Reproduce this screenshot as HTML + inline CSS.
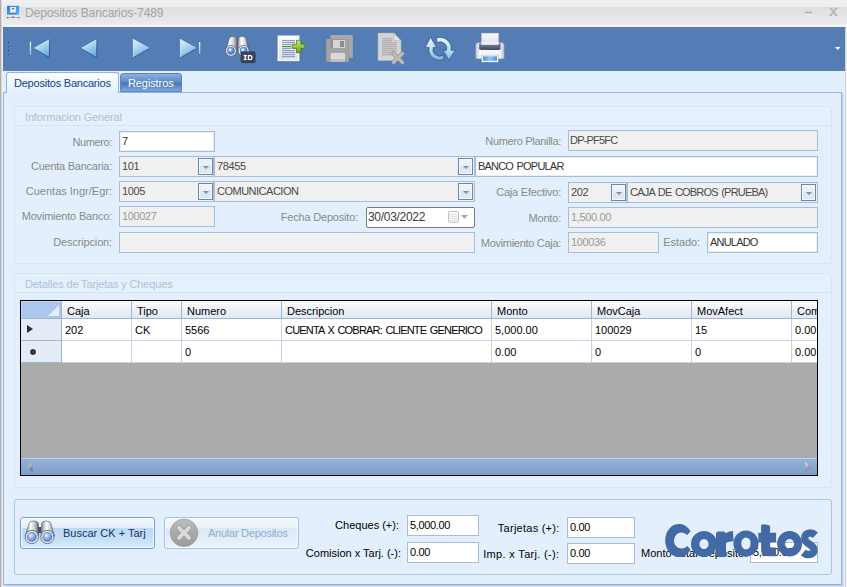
<!DOCTYPE html>
<html><head><meta charset="utf-8">
<style>
*{margin:0;padding:0;box-sizing:border-box}
html,body{width:847px;height:587px;overflow:hidden;background:#E3EFFD;font-family:"Liberation Sans",sans-serif;font-size:11px;color:#000}
.a{position:absolute}
.lbl{position:absolute;color:#8A8A8A;white-space:nowrap;line-height:13px;letter-spacing:-0.3px}
.lblk{position:absolute;color:#000;white-space:nowrap;line-height:13px}
.tb.up,.c.up{letter-spacing:-0.8px;word-spacing:1.2px}
.tb{position:absolute;border:1px solid #A7BDD9;background:#F0F0F0;height:21px;white-space:nowrap;overflow:hidden;padding:3px 0 0 2px;line-height:13px;color:#4A4A4A;letter-spacing:-0.35px}
.tb.w{background:#fff;color:#333;box-shadow:inset 0 0 0 1px #EEEEEE}
.tb.w2{background:#fff;color:#000}
.tb.d{color:#9A9A9A}
.btn{position:absolute;border:1px solid #6A86AD;background:linear-gradient(#EEF3FB 0%,#E8EFF9 45%,#DAE6F5 50%,#DEE9F6 100%);width:15px;height:17px;box-shadow:inset 0 0 0 1px #F4F8FD}
.btn:after{content:"";position:absolute;left:3.5px;top:7px;border-left:3px solid transparent;border-right:3px solid transparent;border-top:3px solid #8E8E8E}
.grp{position:absolute;border:1px solid #D6E4F6;border-radius:3px}
.ghead{position:absolute;left:0;right:0;top:0;height:19px;border-bottom:1px solid #D6E4F6;background:#E5F0FD}
.gtext{position:absolute;left:10px;top:4px;color:#ADC1DC;white-space:nowrap;font-size:11px;letter-spacing:-0.15px}
.hc{position:absolute;top:0;height:18px;border-right:1px solid #9EB6CE;padding:4px 0 0 5px;line-height:13px;white-space:nowrap;overflow:hidden;background:linear-gradient(#F9FBFD,#E2E9F3);border-bottom:1px solid #9EB6CE}
.c{position:absolute;height:22px;border-right:1px solid #C5D3E3;border-bottom:1px solid #C5D3E3;padding:5px 0 0 3px;line-height:13px;white-space:nowrap;overflow:hidden;background:#fff}
</style></head><body>

<!-- window frame -->
<div class="a" style="left:0;top:0;width:847px;height:27px;background:linear-gradient(#F1F1F1 0px,#EDEDED 7px,#DFDFDF 7px,#E2E2E2 12px,#EBEBEB 24px,#F5F4F1 25px,#F5F4F1 27px)"></div>
<div class="a" style="left:0;top:0;width:1px;height:587px;background:#AEAEAE"></div>
<div class="a" style="left:1px;top:0;width:1px;height:587px;background:#D8D8D8"></div><div class="a" style="left:2px;top:0;width:1px;height:587px;background:#F2F0EC"></div>
<div class="a" style="left:845px;top:27px;width:1px;height:560px;background:#D3D3D3"></div><div class="a" style="left:846px;top:27px;width:1px;height:560px;background:#F0F0F0"></div>


<!-- title -->
<svg class="a" style="left:0;top:0" width="24" height="24" viewBox="0 0 24 24">
<defs><linearGradient id="mon" x1="0" y1="0" x2="1" y2="1"><stop offset="0" stop-color="#1F7DE8"/><stop offset="1" stop-color="#5AB4FA"/></linearGradient>
<linearGradient id="scr" x1="0" y1="0" x2="0" y2="1"><stop offset="0" stop-color="#FAF8F4"/><stop offset="1" stop-color="#C8C4BC"/></linearGradient></defs>
<rect x="6.4" y="5.1" width="13.5" height="10.2" fill="#F6F0E8"/>
<rect x="7" y="5.8" width="12.3" height="9" fill="url(#mon)"/>
<rect x="10" y="7.1" width="5.9" height="6.1" fill="url(#scr)"/>
<rect x="12" y="8" width="2" height="1.2" fill="#2E6FD0"/>
<rect x="10.3" y="10" width="5.3" height="1.6" fill="#FFFFFF"/>
<rect x="10" y="13.2" width="5.9" height="0.8" fill="#1F6FD0"/>
<rect x="6.8" y="17" width="12.5" height="1" fill="#B8B8B8"/>
<rect x="7" y="17" width="1.3" height="1.2" fill="#505050"/><rect x="18.2" y="17" width="1.3" height="1.2" fill="#606060"/>
<rect x="11.5" y="16.5" width="3" height="1.5" fill="#808080"/>
</svg>
<div class="a" style="left:25px;top:6px;font-size:12px;color:#A3A3A3;white-space:nowrap;letter-spacing:-0.1px">Depositos Bancarios-7489</div>
<svg class="a" style="left:798px;top:0" width="49" height="26" viewBox="798 0 49 26">
<rect x="805" y="13.6" width="7" height="1" fill="#FAFAFA"/>
<rect x="805" y="11.6" width="7" height="2" fill="#B4B4B4"/>
<g transform="translate(0 1)" fill="none" stroke="#FAFAFA" stroke-width="2.2"><path d="M830.5 8.5 L836.5 15.5 M836.5 8.5 L830.5 15.5"/><path d="M829 8.4 H832.5 M834.5 8.4 H838 M829 15.6 H832.5 M834.5 15.6 H838" stroke-width="1.2"/></g>
<g fill="none" stroke="#BBBBBB" stroke-width="2.2"><path d="M830.5 8.5 L836.5 15.5 M836.5 8.5 L830.5 15.5"/><path d="M829 8.4 H832.5 M834.5 8.4 H838 M829 15.6 H832.5 M834.5 15.6 H838" stroke-width="1.2"/></g>
</svg>


<!-- toolbar -->
<div class="a" style="left:3px;top:27px;width:842px;height:44px;background:#537DB4"></div>


<!-- toolbar icons -->
<svg class="a" style="left:0;top:0" width="847" height="71" viewBox="0 0 847 71">
<defs>
 <linearGradient id="tri" x1="0" y1="0" x2="0.5" y2="1"><stop offset="0" stop-color="#E2F4FC"/><stop offset="0.5" stop-color="#AAD6F0"/><stop offset="1" stop-color="#6DADDD"/></linearGradient>
 <linearGradient id="triR" x1="0" y1="0" x2="0.3" y2="1"><stop offset="0" stop-color="#E6F5FC"/><stop offset="0.5" stop-color="#B5DAF0"/><stop offset="1" stop-color="#7DB5DF"/></linearGradient>
 <linearGradient id="bar" x1="0" y1="0" x2="0" y2="1"><stop offset="0" stop-color="#F0FAFF"/><stop offset="1" stop-color="#8CC0E6"/></linearGradient>
 <linearGradient id="tube" x1="0" y1="0" x2="1" y2="0"><stop offset="0" stop-color="#9098A4"/><stop offset="0.35" stop-color="#FFFFFF"/><stop offset="0.7" stop-color="#C8CCD4"/><stop offset="1" stop-color="#6A707C"/></linearGradient>
 <radialGradient id="lens" cx="0.4" cy="0.35" r="0.75"><stop offset="0" stop-color="#DDEBFF"/><stop offset="0.4" stop-color="#6F9FE8"/><stop offset="0.85" stop-color="#3A6AD0"/><stop offset="1" stop-color="#70C0F0"/></radialGradient>
 <linearGradient id="page" x1="0" y1="0" x2="0" y2="1"><stop offset="0" stop-color="#F7F9FC"/><stop offset="1" stop-color="#DCE3EE"/></linearGradient>
 <linearGradient id="plus" x1="0" y1="0" x2="0" y2="1"><stop offset="0" stop-color="#C9E88A"/><stop offset="0.5" stop-color="#95C846"/><stop offset="1" stop-color="#6FA42A"/></linearGradient>
 <linearGradient id="ref" x1="0" y1="0" x2="0" y2="1"><stop offset="0" stop-color="#E8F7FD"/><stop offset="0.5" stop-color="#BFE0F3"/><stop offset="1" stop-color="#7DB4DE"/></linearGradient>
 <linearGradient id="pbody" x1="0" y1="0" x2="1" y2="0"><stop offset="0" stop-color="#B9C0D2"/><stop offset="0.15" stop-color="#F4F6FA"/><stop offset="0.85" stop-color="#F4F6FA"/><stop offset="1" stop-color="#B9C0D2"/></linearGradient>
 <linearGradient id="pslot" x1="0" y1="0" x2="0" y2="1"><stop offset="0" stop-color="#7A86A0"/><stop offset="1" stop-color="#3E4A63"/></linearGradient>
 <linearGradient id="ppaper" x1="0" y1="0" x2="0" y2="1"><stop offset="0" stop-color="#F8F9FC"/><stop offset="1" stop-color="#D9DEEA"/></linearGradient>
 <linearGradient id="ptray" x1="0" y1="0" x2="1" y2="0"><stop offset="0" stop-color="#4F97DB"/><stop offset="0.5" stop-color="#8CC4F0"/><stop offset="1" stop-color="#4F97DB"/></linearGradient>
</defs>
<!-- grip -->
<g fill="#3A5C8C"><rect x="8" y="42" width="2" height="2"/><rect x="8" y="46" width="2" height="2"/><rect x="8" y="50" width="2" height="2"/><rect x="8" y="54" width="2" height="2"/></g>
<g fill="#8AA8D0"><rect x="9" y="43" width="1" height="1"/><rect x="9" y="47" width="1" height="1"/><rect x="9" y="51" width="1" height="1"/><rect x="9" y="55" width="1" height="1"/></g>
<!-- first -->
<rect x="29.4" y="41.3" width="2.1" height="14" fill="url(#bar)" stroke="#3A5E9C" stroke-width="0.5"/>
<path d="M33.7 48.4 L49.6 39.2 L49.4 57.6 Z" fill="url(#tri)"/><path d="M33.7 48.4 L49.4 57.6 L49.6 39.2" fill="none" stroke="#2C4C88" stroke-width="0.8" stroke-linejoin="round"/><path d="M34.300000000000004 48.1 L49.300000000000004 39.900000000000006" fill="none" stroke="#EAF8FF" stroke-width="0.6"/>
<!-- prev -->
<path d="M81 48.4 L96.9 39.2 L96.7 57.6 Z" fill="url(#tri)"/><path d="M81 48.4 L96.7 57.6 L96.9 39.2" fill="none" stroke="#2C4C88" stroke-width="0.8" stroke-linejoin="round"/><path d="M81.6 48.1 L96.60000000000001 39.900000000000006" fill="none" stroke="#EAF8FF" stroke-width="0.6"/>
<!-- next -->
<path d="M149.5 48.4 L133.2 39.3 L133.39999999999998 57.6 Z" fill="url(#tri)"/><path d="M149.5 48.4 L133.39999999999998 57.6" fill="none" stroke="#2C4C88" stroke-width="0.8" stroke-linejoin="round"/><path d="M133.5 57.1 L133.2 39.3 L148.9 48.1" fill="none" stroke="#EAF8FF" stroke-width="0.6"/>
<!-- last -->
<path d="M196.5 48.4 L180.3 39.3 L180.5 57.6 Z" fill="url(#tri)"/><path d="M196.5 48.4 L180.5 57.6" fill="none" stroke="#2C4C88" stroke-width="0.8" stroke-linejoin="round"/><path d="M180.60000000000002 57.1 L180.3 39.3 L195.9 48.1" fill="none" stroke="#EAF8FF" stroke-width="0.6"/>
<rect x="198.8" y="41.5" width="1.8" height="13.5" fill="url(#bar)" stroke="#3F64A0" stroke-width="0.4"/>
<!-- binoculars ID -->
<path d="M229.2 39 Q229.6 36.3 233.1 36.3 Q236.6 36.3 237 39 L237.2 50 L225.4 50 Z" fill="url(#tube)" stroke="#4A515C" stroke-width="0.6"/>
<path d="M238.2 39 Q238.6 36.3 242.1 36.3 Q245.6 36.3 246 39 L249.2 50 L237.6 50 Z" fill="url(#tube)" stroke="#4A515C" stroke-width="0.6"/>

<circle cx="230.9" cy="50.8" r="5.4" fill="#F7F7F9" stroke="#4E5562" stroke-width="0.7"/>
<circle cx="230.9" cy="50.8" r="3.7" fill="url(#lens)" stroke="#3457B0" stroke-width="0.4"/>
<circle cx="230" cy="49.8" r="1.1" fill="#F4F0FF"/>
<circle cx="243.6" cy="50.8" r="5.4" fill="#F7F7F9" stroke="#4E5562" stroke-width="0.7"/>
<circle cx="243.6" cy="50.8" r="3.7" fill="url(#lens)" stroke="#3457B0" stroke-width="0.4"/>
<circle cx="242.7" cy="49.8" r="1.1" fill="#F4F0FF"/>
<rect x="241.2" y="52" width="13.8" height="10.6" rx="1" fill="#3D475B" stroke="#262C38" stroke-width="0.8"/>
<g fill="#FFFFFF"><rect x="243.6" y="55" width="3.2" height="1.2"/><rect x="244.6" y="55" width="1.3" height="5"/><rect x="243.6" y="58.9" width="3.2" height="1.2"/>
<path d="M247.8 55 H250.6 Q252.6 55 252.6 57.5 Q252.6 60.1 250.6 60.1 H247.8 Z M249.1 56.2 V58.9 H250.4 Q251.3 58.9 251.3 57.5 Q251.3 56.2 250.4 56.2 Z" fill-rule="evenodd"/></g>
<!-- new doc -->
<rect x="277.5" y="35.4" width="22" height="25.7" fill="#FFFFFF" stroke="#8596B8" stroke-width="0.4"/>
<rect x="278.8" y="36.7" width="19.4" height="23.1" fill="url(#page)"/>
<g fill="#8E9FC8"><rect x="282" y="40" width="13" height="1.2"/><rect x="282" y="42" width="13" height="1.2"/><rect x="282" y="44" width="9" height="1.2"/><rect x="282" y="48" width="9" height="1.2"/><rect x="282" y="50" width="13" height="1.2"/><rect x="282" y="52" width="13" height="1.2"/><rect x="282" y="54" width="13" height="1.2"/><rect x="282" y="56" width="13" height="1.2"/></g>
<rect x="282" y="46" width="9" height="1.2" fill="#4E9A12"/>
<path d="M296.5 40.3 H300.9 V44.2 H304.8 V48.4 H300.9 V52.7 H296.5 V48.4 H292.1 V44.2 H296.5 Z" fill="url(#plus)" stroke="#3F6E14" stroke-width="0.7" stroke-linejoin="round"/>
<!-- save (disabled) -->
<path d="M330.5 35.5 Q330.5 34.9 331.5 34.9 L351.8 34.9 Q352.8 34.9 352.8 36 L352.8 57.7 L348.9 57.7 L348.9 38.9 L330.5 38.9 Z" fill="#A9A9A9"/>
<rect x="326.2" y="38.9" width="22.7" height="22.9" rx="1" fill="#A3A3A3"/>
<rect x="330.4" y="38.9" width="15.2" height="9.5" fill="#959595"/>
<rect x="333" y="39.9" width="12.2" height="8.2" fill="#D6D6D6"/>
<rect x="340" y="41" width="4" height="6" fill="#8C8C8C"/>
<rect x="330.7" y="52.9" width="14.3" height="8.9" fill="#DADADA"/>
<rect x="330.7" y="59.2" width="14.3" height="2.6" fill="#BDBDBD"/>
<!-- delete doc (disabled) -->
<path d="M378 33.1 H393.8 L401 40.7 V60.5 H378 Z" fill="#D4D4D4" stroke="#B4B4B4" stroke-width="0.5"/>
<path d="M393.8 33.1 V40.7 H401 Z" fill="#E6E6E6" stroke="#A8A8A8" stroke-width="0.5"/>
<g fill="#A6A6A6"><rect x="382" y="38.3" width="10" height="1"/><rect x="382" y="40.3" width="10" height="1"/><rect x="382" y="42.3" width="15" height="1"/><rect x="382" y="44.3" width="15" height="1"/><rect x="382" y="46.3" width="15" height="1"/><rect x="382" y="48.3" width="15" height="1"/><rect x="382" y="50.3" width="15" height="1"/><rect x="382" y="52.3" width="10" height="1"/><rect x="382" y="54.3" width="10" height="1"/></g>
<path d="M393.5 53.5 L402.5 62.5 M402.5 53.5 L393.5 62.5" stroke="#8E8E8E" stroke-width="4.2" stroke-linecap="round"/>
<path d="M393.5 53.5 L402.5 62.5 M402.5 53.5 L393.5 62.5" stroke="#BDBDBD" stroke-width="2.8" stroke-linecap="round"/>
<!-- refresh -->
<path d="M436.5 47.4 L433.3 47.4 A6.6 6.6 0 0 0 443.3 55 L444 59.3 A10.9 10.9 0 0 1 429 47.4 L425 47.4 L430.7 37.3 Z" fill="url(#ref)" stroke="#2E4F8C" stroke-width="0.7" stroke-linejoin="round"/>
<path d="M436.3 38.2 A10.9 10.9 0 0 1 451 50.2 L455.2 50.2 L448.9 60.2 L443.2 50.2 L446.6 50.2 A6.6 6.6 0 0 0 437.2 42.6 Z" fill="url(#ref)" stroke="#2E4F8C" stroke-width="0.7" stroke-linejoin="round"/>
<!-- printer -->
<rect x="481.3" y="33.1" width="17.4" height="12" fill="url(#ppaper)" stroke="#A8B0C8" stroke-width="0.5"/>
<path d="M475.4 45 Q475.4 42.5 478 42.5 L502 42.5 Q504.3 42.5 504.3 45 L504.3 58.9 L475.4 58.9 Z" fill="url(#pbody)" stroke="#6F7A96" stroke-width="0.5"/>
<path d="M479.1 43.2 L500.6 43.2 L500.6 48.3 Q500.6 50.1 498.6 50.1 L481.1 50.1 Q479.1 50.1 479.1 48.3 Z" fill="url(#pslot)"/>
<rect x="481.3" y="42" width="17.4" height="3" fill="url(#ppaper)"/>
<rect x="481.7" y="55.1" width="16.6" height="7" fill="#FFFFFF" stroke="#8A94AE" stroke-width="0.4"/>
<rect x="483" y="56.3" width="14" height="4.6" fill="url(#ptray)"/>
<!-- overflow arrow -->
<path d="M835 47 L840.5 47 L837.75 50 Z" fill="#FFFFFF"/>
</svg>

<!-- content -->
<div class="a" style="left:3px;top:71px;width:842px;height:514px;background:#E3EFFD"></div>

<!-- tabs -->
<div class="a" style="left:3px;top:92px;width:839px;height:493px;border:1px solid #90B3E0;background:#E3EFFD;box-shadow:1px 1px 0 #BCD0EC,2px 2px 0 #D3E2F6"></div>
<div class="a" style="left:6px;top:72px;width:113px;height:21px;border:1px solid #90B3E0;border-bottom:none;border-radius:3px 3px 0 0;background:linear-gradient(#FBFDFF,#E3EFFD)"></div>
<div class="a" style="left:14px;top:77px;color:#15428B;white-space:nowrap;letter-spacing:-0.22px">Depositos Bancarios</div>
<div class="a" style="left:120px;top:73px;width:62px;height:19px;border:1px solid #5D86C0;border-radius:3px 3px 0 0;background:linear-gradient(#8DB0E0 0%,#5F8BC8 45%,#4B77B8 55%,#7FA5DA 100%)"></div>
<div class="a" style="left:128px;top:77px;color:#fff;white-space:nowrap;letter-spacing:-0.1px">Registros</div>

<!-- group 1 -->
<div class="grp" style="left:14px;top:106px;width:818px;height:158px"><div class="ghead"><div class="gtext">Informacion General</div></div></div>


<!-- form fields -->
<div class="lbl" style="right:735px;top:136px;letter-spacing:-0.37px">Numero:</div>
<div class="tb w" style="left:119px;top:131px;width:96px">7</div>
<div class="lbl" style="right:286px;top:135px;letter-spacing:-0.31px">Numero Planilla:</div>
<div class="tb up" style="left:568px;top:130px;width:250px;padding-left:1px">DP-PF5FC</div>

<div class="lbl" style="right:735px;top:160px;letter-spacing:-0.25px">Cuenta Bancaria:</div>
<div class="tb" style="left:119px;top:156px;width:95px">101</div>
<div class="btn" style="left:198px;top:158px"></div>
<div class="tb" style="left:214px;top:156px;width:261px">78455</div>
<div class="btn" style="left:458px;top:158px"></div>
<div class="tb w up" style="left:475px;top:156px;width:343px">BANCO POPULAR</div>

<div class="lbl" style="right:735px;top:185px;letter-spacing:0.00px">Cuentas Ingr/Egr:</div>
<div class="tb" style="left:119px;top:181px;width:95px">1005</div>
<div class="btn" style="left:198px;top:183px"></div>
<div class="tb up" style="left:214px;top:181px;width:261px;letter-spacing:-0.5px">COMUNICACION</div>
<div class="btn" style="left:458px;top:183px"></div>
<div class="lbl" style="right:286px;top:186px;letter-spacing:-0.22px">Caja Efectivo:</div>
<div class="tb" style="left:568px;top:182px;width:59px">202</div>
<div class="btn" style="left:611px;top:184px"></div>
<div class="tb up" style="left:627px;top:182px;width:191px">CAJA DE COBROS (PRUEBA)</div>
<div class="btn" style="left:801px;top:184px"></div>

<div class="lbl" style="right:735px;top:210px;letter-spacing:-0.19px">Movimiento Banco:</div>
<div class="tb d" style="left:119px;top:206px;width:96px">100027</div>
<div class="lbl" style="right:489px;top:211px;letter-spacing:-0.19px">Fecha Deposito:</div>
<div class="tb w" style="left:366px;top:207px;width:109px;border-color:#7A7A7A;border-radius:2px;padding-left:1px;padding-top:3px;box-shadow:none;color:#3A3A3A;font-size:12px;letter-spacing:-0.3px">30/03/2022</div>
<div class="lbl" style="right:286px;top:212px;letter-spacing:-0.20px">Monto:</div>
<div class="tb d" style="left:568px;top:207px;width:250px">1,500.00</div>

<div class="lbl" style="right:735px;top:236px;letter-spacing:-0.15px">Descripcion:</div>
<div class="tb" style="left:119px;top:232px;width:356px"></div>
<div class="lbl" style="right:286px;top:237px;letter-spacing:-0.30px">Movimiento Caja:</div>
<div class="tb d" style="left:568px;top:232px;width:91px">100036</div>
<div class="lbl" style="right:147px;top:236px;letter-spacing:-0.08px">Estado:</div>
<div class="tb w up" style="left:707px;top:232px;width:111px">ANULADO</div>

<!-- group 2 -->
<div class="grp" style="left:14px;top:273px;width:818px;height:215px"><div class="ghead"><div class="gtext">Detalles de Tarjetas y Cheques</div></div></div>

<!-- grid -->
<div class="a" style="left:20px;top:300px;width:798px;height:176px;border:1px solid #000;background:#ABABAB;overflow:hidden">
 <div class="a" style="left:0;top:0;width:41px;height:18px;background:#ABC7EE;border-right:1px solid #9EB6CE;border-bottom:1px solid #9EB6CE;box-shadow:inset 1px 1px 0 #C6DAF4"></div>
 <div class="a" style="left:27px;top:4px;width:0;height:0;border-left:11px solid transparent;border-bottom:11px solid #E4EDF8"></div>
 <div class="hc" style="left:41px;width:70px">Caja</div>
 <div class="hc" style="left:111px;width:50px">Tipo</div>
 <div class="hc" style="left:161px;width:100px">Numero</div>
 <div class="hc" style="left:261px;width:210px">Descripcion</div>
 <div class="hc" style="left:471px;width:100px">Monto</div>
 <div class="hc" style="left:571px;width:100px">MovCaja</div>
 <div class="hc" style="left:671px;width:100px">MovAfect</div>
 <div class="hc" style="left:771px;width:40px">Com</div>

 <div class="a" style="left:0;top:18px;width:41px;height:22px;background:#E4ECF7;border-right:1px solid #9EB6CE;border-bottom:1px solid #9EB6CE"></div>
 <div class="a" style="left:6px;top:24px;width:0;height:0;border-top:4.5px solid transparent;border-bottom:4.5px solid transparent;border-left:6px solid #2E2E2E"></div>
 <div class="c" style="left:41px;top:18px;width:70px">202</div>
 <div class="c" style="left:111px;top:18px;width:50px">CK</div>
 <div class="c" style="left:161px;top:18px;width:100px">5566</div>
 <div class="c up" style="left:261px;top:18px;width:210px">CUENTA X COBRAR: CLIENTE GENERICO</div>
 <div class="c" style="left:471px;top:18px;width:100px">5,000.00</div>
 <div class="c" style="left:571px;top:18px;width:100px">100029</div>
 <div class="c" style="left:671px;top:18px;width:100px">15</div>
 <div class="c" style="left:771px;top:18px;width:40px">0.00</div>

 <div class="a" style="left:0;top:40px;width:41px;height:22px;background:#E4ECF7;border-right:1px solid #9EB6CE;border-bottom:1px solid #9EB6CE"></div>
 <div class="a" style="left:8.5px;top:48px;width:6px;height:6px;border-radius:50%;background:#3A3A3A;box-shadow:0 0 0 1px rgba(255,255,255,0.6)"></div>
 <div class="c" style="left:41px;top:40px;width:70px"></div>
 <div class="c" style="left:111px;top:40px;width:50px"></div>
 <div class="c" style="left:161px;top:40px;width:100px">0</div>
 <div class="c" style="left:261px;top:40px;width:210px"></div>
 <div class="c" style="left:471px;top:40px;width:100px">0.00</div>
 <div class="c" style="left:571px;top:40px;width:100px">0</div>
 <div class="c" style="left:671px;top:40px;width:100px">0</div>
 <div class="c" style="left:771px;top:40px;width:40px">0.00</div>

 <div class="a" style="left:0;top:157px;width:796px;height:18px;background:linear-gradient(#94B2D9,#7D9CC7);border-top:1px solid #BAD3F2;border-bottom:1px solid #A2BEE4"></div>
 <svg class="a" style="left:4.5px;top:160px" width="8" height="12" viewBox="0 0 8 12"><defs><linearGradient id="sa" x1="0" y1="0" x2="0.4" y2="1"><stop offset="0" stop-color="#F0F0FA"/><stop offset="0.5" stop-color="#B0AECC"/><stop offset="1" stop-color="#6E6C8A"/></linearGradient></defs><path d="M1.2 6 L6.5 1 L6.5 11 Z" fill="url(#sa)"/></svg>
 <svg class="a" style="left:783px;top:160px" width="8" height="12" viewBox="0 0 8 12"><path d="M6.8 6 L1.5 1 L1.5 11 Z" fill="url(#sa)"/></svg>
</div>

<!-- group 3 -->
<div class="grp" style="left:14px;top:499px;width:818px;height:76px;border-color:#A9C5E8"></div>

<div class="a" style="left:20px;top:517px;width:135px;height:32px;border:1px solid #6E9FD8;border-radius:3px;box-shadow:inset 0 0 0 1px rgba(255,255,255,0.7);background:linear-gradient(#F4F8FD 0%,#E2EDFA 34%,#BDD9F4 35%,#C6E0F7 70%,#D8ECFB 100%)"></div>
<div class="a" style="left:63px;top:527px;color:#16316B;white-space:nowrap">Buscar CK + Tarj</div>
<div class="a" style="left:164px;top:517px;width:135px;height:32px;border:1px solid #A3C1E6;border-radius:3px;box-shadow:inset 0 0 0 1px rgba(255,255,255,0.6);background:linear-gradient(#F5F8FC 0%,#ECF2FA 34%,#DCE9F7 35%,#E2EEF9 70%,#EAF3FB 100%)"></div>
<div class="a" style="left:208px;top:527px;color:#93ADCF;white-space:nowrap;letter-spacing:-0.25px">Anular Depositos</div>

<div class="lblk" style="right:448px;top:519px">Cheques (+):</div>
<div class="tb w2" style="left:407px;top:515px;width:72px">5,000.00</div>
<div class="lblk" style="right:446px;top:547px">Comision x Tarj. (-):</div>
<div class="tb w2" style="left:407px;top:542px;width:72px">0.00</div>
<div class="lblk" style="right:287.5px;top:522px;letter-spacing:0.25px">Tarjetas (+):</div>
<div class="tb w2" style="left:567px;top:517px;width:68px">0.00</div>
<div class="lblk" style="right:287.5px;top:548px;letter-spacing:0.33px">Imp. x Tarj. (-):</div>
<div class="tb w2" style="left:567px;top:543px;width:68px">0.00</div>
<div class="lblk" style="left:641px;top:547px">Monto Total Deposito:</div>
<div class="tb w2" style="left:750px;top:542px;width:68px">5,500.00</div>
<svg class="a" style="left:0;top:0" width="847" height="587" viewBox="0 0 847 587"><g fill="#4369A6" fill-rule="evenodd">
<path d="M690.57 531.46 A13.8 16.6 0 1 0 690.57 549.54 L687.15 545.92 A7.6 8.1 0 1 1 687.15 535.08 Z"/>
<path d="M691.00 544.00 A13 13 0 1 0 717.00 544.00 A13 13 0 1 0 691.00 544.00 Z M699.40 544.00 A4.6 5.1 0 1 1 708.60 544.00 A4.6 5.1 0 1 1 699.40 544.00 Z"/>
<path d="M716 534 Q716 531.5 718.5 531.5 L723.5 531.5 Q725.5 531.5 725.8 533.5 Q728 531 733 531 L733.6 541.2 Q728.5 541.2 726 543 L726 554.5 Q726 557 723.5 557 L718.5 557 Q716 557 716 554.5 Z"/>
<path d="M733.40 543.50 A12.6 13 0 1 0 758.60 543.50 A12.6 13 0 1 0 733.40 543.50 Z M741.20 543.50 A4.8 5.9 0 1 1 750.80 543.50 A4.8 5.9 0 1 1 741.20 543.50 Z"/>
<path d="M761.1 526 Q761.1 524.2 763 524.2 L768.5 525 Q770.1 525.3 770.1 527 L770.1 532.7 L776.1 532.7 L776.1 542.3 L770.1 542.3 L770.1 546 Q770.1 547.5 772 547.5 L776 547.5 L776 556.3 L768 556.3 Q761.1 556.3 761.1 549.5 L761.1 542.3 L758.3 542.3 L758.3 532.7 L761.1 532.7 Z"/>
<path d="M777.10 543.80 A12.5 12.8 0 1 0 802.10 543.80 A12.5 12.8 0 1 0 777.10 543.80 Z M785.00 543.80 A4.6 4.8 0 1 1 794.20 543.80 A4.6 4.8 0 1 1 785.00 543.80 Z"/>
</g><path d="M815.4 535.2 C811.5 531.6 804.2 532.4 804.9 539.2 C805.6 544.6 813.8 544 814 549.8 C814.2 555.2 806.8 555.6 803.2 552.6" fill="none" stroke="#4369A6" stroke-width="7.4"/></svg>


<!-- button icons, date icon -->
<svg class="a" style="left:0;top:0" width="847" height="587" viewBox="0 0 847 587">
<defs>
 <linearGradient id="tube2" x1="0" y1="0" x2="1" y2="0"><stop offset="0" stop-color="#7C8490"/><stop offset="0.4" stop-color="#FFFFFF"/><stop offset="0.75" stop-color="#B8BDC6"/><stop offset="1" stop-color="#59606C"/></linearGradient>
 <radialGradient id="lens2" cx="0.4" cy="0.35" r="0.75"><stop offset="0" stop-color="#F8FBFF"/><stop offset="0.3" stop-color="#A4C6F4"/><stop offset="0.75" stop-color="#5A8CE0"/><stop offset="1" stop-color="#88CCF0"/></radialGradient>
 <linearGradient id="xc" x1="0" y1="0" x2="0" y2="1"><stop offset="0" stop-color="#BEBEBE"/><stop offset="0.5" stop-color="#A9A9A9"/><stop offset="1" stop-color="#9C9C9C"/></linearGradient>
</defs>
<rect x="35" y="527" width="6" height="6" fill="#4A5060"/>
<path d="M29.1 523.5 Q29.5 521 33.7 521 Q38 521 38.4 523.5 L38.6 536 L25.3 536 Z" fill="url(#tube2)" stroke="#4E5562" stroke-width="0.6"/>
<path d="M41.6 523.5 Q42 521 46.2 521 Q50.5 521 50.9 523.5 L54.5 536 L41.2 536 Z" fill="url(#tube2)" stroke="#4E5562" stroke-width="0.6"/>
<circle cx="31.8" cy="537" r="6.6" fill="#F2F3F5" stroke="#4E5562" stroke-width="0.8"/>
<circle cx="31.8" cy="537" r="4.6" fill="url(#lens2)" stroke="#3A55A0" stroke-width="0.5"/>
<circle cx="47.4" cy="537" r="6.6" fill="#F2F3F5" stroke="#4E5562" stroke-width="0.8"/>
<circle cx="47.4" cy="537" r="4.6" fill="url(#lens2)" stroke="#3A55A0" stroke-width="0.5"/>
<circle cx="184" cy="532.8" r="13.8" fill="url(#xc)" stroke="#909090" stroke-width="0.6"/>
<path d="M179 527.8 L189 537.8 M189 527.8 L179 537.8" stroke="#9A9A9A" stroke-width="5.2" stroke-linecap="round"/>
<path d="M179 527.8 L189 537.8 M189 527.8 L179 537.8" stroke="#DADADA" stroke-width="3.8" stroke-linecap="round"/>
<rect x="448.5" y="211.5" width="10" height="10.8" rx="1" fill="#F6F7FA" stroke="#BDB8B8" stroke-width="0.9"/>
<rect x="450" y="214" width="7" height="7" fill="#E4E6EC"/>
<g fill="#FFFFFF"><rect x="451" y="215" width="1" height="1"/><rect x="453" y="215" width="1" height="1"/><rect x="455" y="215" width="1" height="1"/><rect x="451" y="217" width="1" height="1"/><rect x="453" y="217" width="1" height="1"/><rect x="455" y="217" width="1" height="1"/><rect x="451" y="219" width="1" height="1"/><rect x="453" y="219" width="1" height="1"/></g>
<path d="M460.9 215 L468.1 215 L464.5 218.8 Z" fill="#A8A8A0"/>
</svg>

</body></html>
